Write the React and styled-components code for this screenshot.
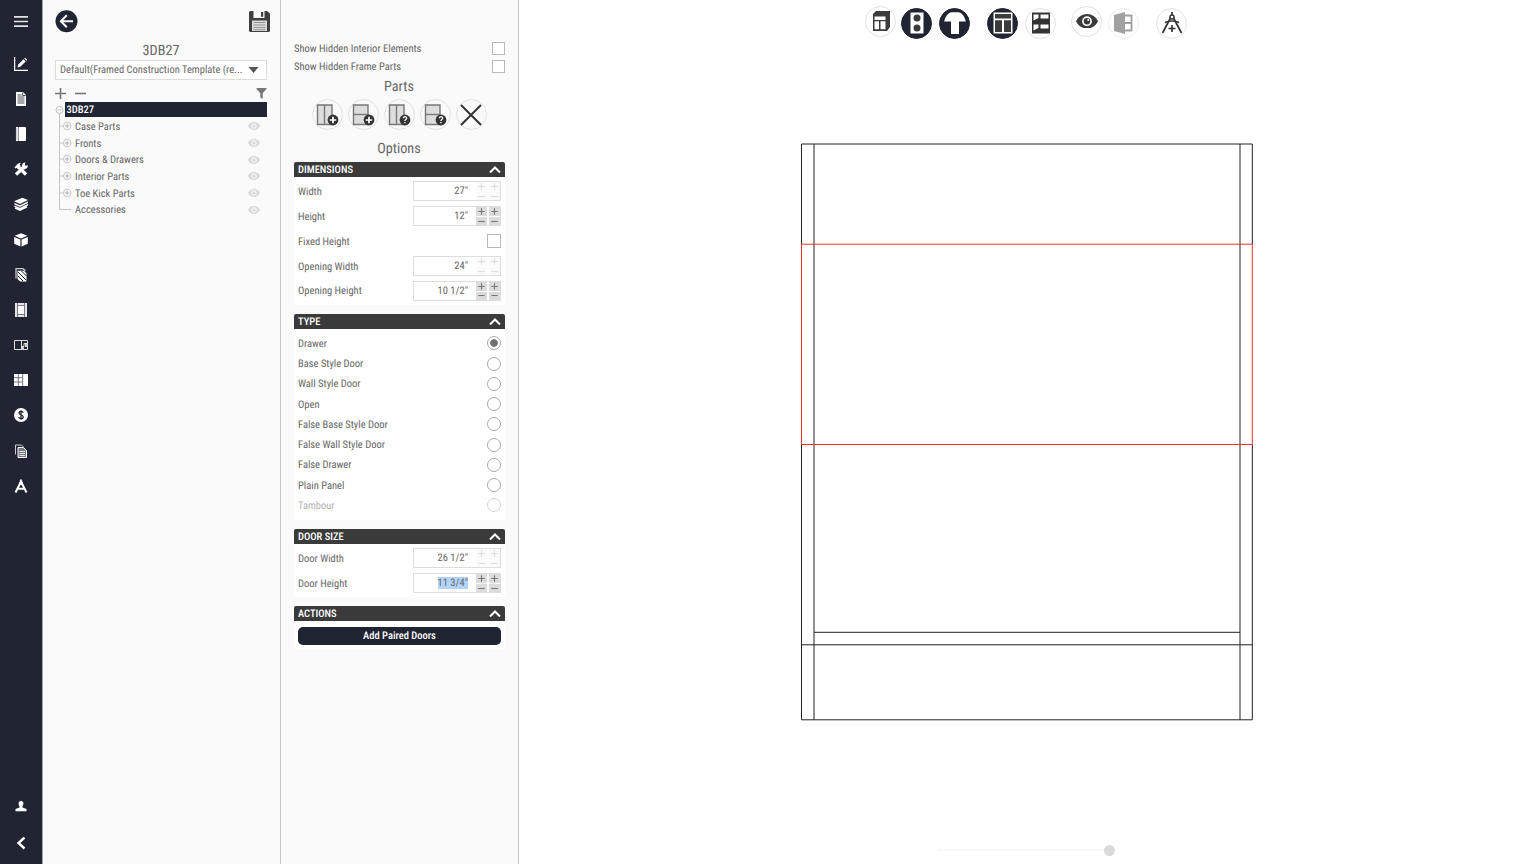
import React from "react";
import styled, {createGlobalStyle, css} from "styled-components";

const GlobalStyle = createGlobalStyle`
  * {
    box-sizing: border-box;
  }

  body {
    margin: 0;
    overflow: hidden;
    background: #fff;
    color: #666;
    font-family: "Roboto Condensed", Roboto, sans-serif;
    font-stretch: 75%;
    font-size: 10.5px;
    text-rendering: geometricPrecision;
  }

  svg {
    display: block;
    flex-shrink: 0;
  }
`

const Page = styled.div`
  display: flex;
  width: 1536px;
  height: 864px;
`

const Sidebar = styled.nav`
  display: flex;
  flex-direction: column;
  width: 43px;
  background: #212433;
  border-right: 1px solid #a6a7ad;
`

const NavItem = styled.a`
  display: flex;
  align-items: center;
  justify-content: center;
  height: ${({$height}) => $height || 35.2}px;
  margin-top: ${({$push}) => $push ? "auto" : 0};
  color: #fff;
`

const Panel = styled.section`
  display: flex;
  flex-direction: column;
  width: 238px;
  padding: 0 13px 0 12px;
  background: #fafafa;
  border-right: 1px solid #c6c6c6;
`

const PanelHeader = styled.header`
  display: flex;
  align-items: center;
  justify-content: space-between;
  height: 42px;
  margin: 0 -2.5px 0 -.5px;
`

const Heading = styled.h2`
  height: ${({$height}) => $height}px;
  margin: 0;
  font-size: 14.2px;
  font-weight: 400;
  line-height: ${({$height}) => $height}px;
  text-align: center;
`

const TemplateSelect = styled.div`
  display: flex;
  align-items: center;
  justify-content: space-between;
  height: 20px;
  padding: 0 7px 1px 4px;
  background: #fff;
  border: 1px solid #ddd;
  white-space: nowrap;
`

const TreeTools = styled.div`
  display: flex;
  align-items: center;
  gap: 9px;
  height: 22px;
  padding-top: 4px;

  svg:last-child {
    margin-left: auto;
  }
`

const TreeRoot = styled.div`
  display: flex;
  align-items: center;
  height: 16px;

  b {
    flex: 1;
    height: 15px;
    margin: -1px 0 0 1px;
    padding-left: 1.5px;
    background: #212433;
    color: #fff;
    font-weight: 500;
    line-height: 15px;
  }
`

const TreeRow = styled.div`
  display: flex;
  align-items: center;
  height: 16.7px;
  padding-right: 7px;

  span {
    flex: 1;
  }
`

const CheckRow = styled.label`
  display: flex;
  align-items: center;
  justify-content: space-between;
  height: 17.6px;
  padding-left: 1px;
`

const Checkbox = styled.i`
  width: ${({$size}) => $size || 13}px;
  height: ${({$size}) => $size || 13}px;
  background: #fff;
  border: 1px solid #b9b9b9;
`

const PartButtons = styled.div`
  display: flex;
  justify-content: center;
  gap: 5px;
  height: 37px;
`

const RoundButton = styled.button`
  display: flex;
  align-items: center;
  justify-content: center;
  flex-shrink: 0;
  width: 31px;
  height: 31px;
  margin: ${({$top}) => $top || 0}px 0 0 ${({$left}) => $left || 0}px;
  padding: 0;
  border: 1px solid ${({$active}) => $active ? "#212433" : "#e2e2e2"};
  border-radius: 50%;
  background: ${({$active}) => $active ? "#212433" : "transparent"};
  opacity: ${({$disabled}) => $disabled ? .55 : 1};
`

const SectionWrapper = styled.section`
  height: ${({$height}) => $height}px;
  margin: 0 0 9px .5px;
  background: #fff;
  border-radius: 3px;
`

const SectionHeader = styled.header`
  display: flex;
  align-items: center;
  justify-content: space-between;
  height: 15px;
  padding: 0 4px 1px 4.5px;
  border-radius: 2px 2px 0 0;
  background: #3a3a3a;
  color: #fff;
  font-weight: 500;
`

const SectionBody = styled.div`
  padding: ${({$top}) => $top}px 4px 0 4.5px;
`

const FieldRow = styled.div`
  display: flex;
  align-items: center;
  justify-content: space-between;
  height: ${({$height}) => $height || 24.6}px;
  opacity: ${({$disabled}) => $disabled ? .5 : 1};
`

const InputBox = styled.div`
  display: flex;
  align-items: center;
  justify-content: flex-end;
  width: 88px;
  height: 20px;
  background: #fff;
  border: 1px solid #ddd;
`

const Value = styled.span`
  margin-right: 8px;
  line-height: 12px;
  background: ${({$selected}) => $selected ? "#b3d4fd" : "transparent"};
`

const Stepper = styled.div`
  display: grid;
  grid-template-columns: 11px 11px;
  grid-template-rows: 9px 8px;
  gap: 1px 2px;
  opacity: ${({$disabled}) => $disabled ? .25 : 1};
`

const Step = styled.i`
  display: flex;
  align-items: center;
  justify-content: center;
  background: ${({$disabled}) => $disabled ? "#eee" : "#dcdcdc"};
`

const Radio = styled.i`
  width: 14px;
  height: 14px;
  border: 1px solid #aaa;
  border-radius: 50%;
  background: #fff;
  ${({$checked}) => $checked && css`
    background: radial-gradient(circle, #707070 3.4px, #fff 4.2px);
  `}
`

const ActionButton = styled.button`
  display: block;
  width: 100%;
  height: 18px;
  padding: 0 0 1px;
  border: 0;
  border-radius: 5px;
  background: #212433;
  color: #fff;
  font: inherit;
  font-weight: 500;
  text-rendering: inherit;
`

const Workspace = styled.main`
  display: flex;
  flex: 1;
  flex-direction: column;
  align-items: center;
  padding-right: 2px;
  background: #fff;
`

const Toolbar = styled.div`
  display: flex;
  align-self: flex-start;
  height: 143px;
  padding: 5.500px 0 0 346.400px;
`

const Slider = styled.div`
  display: flex;
  align-items: center;
  width: 177px;
  height: 12px;
  margin-top: 123px;
`

const SliderTrack = styled.div`
  flex: 1;
  height: 2px;
  background: #f7f7f7;
`

const SliderKnob = styled.i`
  width: 11px;
  height: 11px;
  border-radius: 50%;
  background: #dadada;
`

const icons = {
  menu: <path d="M0 1.8h14M0 6.500h14M0 11.200h14" stroke="#e4e4e8" strokeWidth="1.700"/>,
  design: <>
    <path d="M.6 0v13.4H14" fill="none" stroke="#fff" strokeWidth="1.3"/>
    <path d="M3.5 10.5l.7-3 5.3-5.2 2.2 2.2-5.4 5.2zM10.2 1.6l.9-.8 2.2 2.1-.9.9z" fill="#fff"/>
  </>,
  document: <>
    <path d="M2 0h7l3 3v11H2z" fill="#fff"/>
    <path d="M3.5 3h4M3.5 5h7M3.5 7h7M3.5 9h7M3.5 11h7M8.7.5v3h3" fill="none" stroke="#212433" strokeWidth=".8"/>
  </>,
  notebook: <>
    <path d="M2 0h9a1 1 0 011 1v12a1 1 0 01-1 1H2z" fill="#fff"/>
    <path d="M4.5 0v14" stroke="#777985" strokeWidth=".8"/>
    <path d="M1.5 2h2M1.5 4h2M1.5 6h2M1.5 8h2M1.5 10h2M1.5 12h2" stroke="#777985" strokeWidth=".7"/>
  </>,
  tools: <>
    <path d="M2 12.5L11 4M4 4.500l8 8" stroke="#fff" strokeWidth="3.3"/>
    <path d="M.4 5.5L4 1.4l3-.6-1.2 1.6.8 1.7L3.8 7 2.6 5.8l-1 .8zM7.600 4.500L8.800 1.300l2.500-1-.5 2.500 1 .9 2.200-.4-.8 2.800-3 1.500z" fill="#fff"/>
  </>,
  layers: <>
    <path d="M0 4.2L8.3.7 14 3 6 7z" fill="#fff"/>
    <path d="M.4 6.7L6 9.2l8-4M.4 9.2L6 11.7l8-4M1 11.2l5 2 7-3.3" fill="none" stroke="#fff" strokeWidth="1.4"/>
  </>,
  cube: <path d="M7 .3l6.3 2.5L7 5.5.7 2.8zM.2 4l6.2 2.6v7L.2 10.8zM13.8 4L7.6 6.6v7l6.2-2.8z" fill="#fff"/>,
  material: <>
    <path d="M2 10.500V.7h7l2.500 2" fill="none" stroke="#ccc" strokeWidth="1.3"/>
    <path d="M3.500 2.700H10l2.500 2.700v8.100H6.200L3.500 11z" fill="#fff"/>
    <path d="M4 4l8.500 8.500M4 8l5 5M7.500 3l5 5" stroke="#212433" strokeWidth="1"/>
  </>,
  frame: <>
    <path d="M1 0h12v14H1z" fill="#e4e4e8"/>
    <path d="M4 2.500h6v9H4z" fill="#fff"/>
    <path d="M3.500 0v14M10.500 0v14M3.500 2.500h7M3.500 11.500h7" stroke="#6a6c78" strokeWidth=".9"/>
  </>,
  room: <>
    <path d="M.5 2.5h13v9H.5zM7.5 2.5v9M10 5.5h3.5M10 5.5v3H7.5" fill="none" stroke="#ddd"/>
    <path d="M8 9h2v2.5H8zM11 6h2.5v3H11z" fill="#ccc"/>
  </>,
  grid: <>
    <path d="M0 1h14v12H0z" fill="#fff"/>
    <path d="M4.300 1v12M8.700 1v12M0 4.700h8.700M0 9h8.700" stroke="#6a6c78" strokeWidth=".9"/>
  </>,
  dollar: <>
    <circle cx="7" cy="7" r="7" fill="#fff"/>
    <path d="M9.2 4.8C8.8 2.9 5 2.9 5 5s4.2 1.7 4.2 3.9-4 2.2-4.5.2M7 2.2v9.6" fill="none" stroke="#212433" strokeWidth="1.3"/>
  </>,
  copy: <>
    <path d="M1.500 10.500V1h6l2 2" fill="none" stroke="#ccc"/>
    <path d="M4 3.500h5.500l3 3.300v6.700H4z" fill="#777985" stroke="#fff"/>
    <path d="M5.500 7.500H11M5.500 9.500H11M5.500 11.500H11" stroke="#fff" strokeWidth=".8"/>
  </>,
  compass: <>
    <path d="M7 .5v3M6.300 4L1.500 13.500M7.700 4l4.800 9.500M3 9.800h8" fill="none" stroke="#fff" strokeWidth="2"/>
    <circle cx="7" cy="4" r="2" fill="#fff"/>
  </>,
  user: <path d="M1.500 12.200V10l4-1.500V7.200C3.800 4.800 4.500 2 7 2s3.200 2.800 1.500 5.200v1.300l4 1.500v2.200z" fill="#fff"/>,
  collapse: <path d="M10.500 .5L4.500 6l6 5.500" fill="none" stroke="#fff" strokeWidth="2.400"/>
}

const navItems = ["design", "document", "notebook", "tools", "layers", "cube", "material", "frame", "room", "grid", "dollar", "copy", "compass"]

const treeItems = ["Case Parts", "Fronts", "Doors & Drawers", "Interior Parts", "Toe Kick Parts", "Accessories"]

const doorTypes = ["Drawer", "Base Style Door", "Wall Style Door", "Open", "False Base Style Door", "False Wall Style Door", "False Drawer", "Plain Panel", "Tambour"]

const NavIcon = ({name}) => (
    <svg width="14" height="14" viewBox="0 0 14 14">{icons[name]}</svg>
)

const BackIcon = () => (
    <svg width="23" height="23" viewBox="0 0 23 23">
        <circle cx="11.5" cy="11.3" r="11" fill="#212433"/>
        <path d="M18 11.3H6M11.8 5.3l-6 6 6 6" fill="none" stroke="#fff" strokeWidth="2"/>
    </svg>
)

const SaveIcon = () => (
    <svg width="21" height="21" viewBox="0 0 21 21">
        <path d="M1 0h17l3 2.5V20l-1 1H1l-1-1V1z" fill="#3f3f3f"/>
        <path d="M4.5 0h11v7h-11z" fill="#fafafa"/>
        <path d="M12 1h2.2v4.8H12z" fill="#3f3f3f"/>
        <path d="M3 9.5h15V20H3z" fill="#ddd"/>
        <path d="M4.5 11.5h12M4.5 14h12M4.5 16.5h12M4.5 18.7h12" stroke="#888" strokeWidth=".9"/>
    </svg>
)

const TreeLine = ({last}) => (
    <svg width="20" height="16.7" viewBox="0 0 20 16.7">
        <path d={last ? "M4.500 0v8.500H16" : "M4.500 0v16.700M4.500 8H9"} fill="none" stroke="#c4c4c4"/>
        {!last && <>
            <circle cx="12.2" cy="8" r="3.8" fill="#fafafa" stroke="#c4c4c4" strokeWidth=".9"/>
            <path d="M9.8 8h4.8M12.2 5.6v4.8" stroke="#b0b0b0" strokeWidth=".9"/>
        </>}
    </svg>
)

const EyeIcon = ({width, color, background}) => (
    <svg width={width} height={width * .66} viewBox="0 0 22 14.500">
        <path d="M0 7.200C2 3 6 0 11 0s9 3 11 7.200C20 11.500 16 14.500 11 14.500S2 11.500 0 7.200z" fill={color}/>
        <circle cx="11" cy="7.200" r="4.900" fill={background}/>
        <circle cx="11" cy="7.200" r="3.200" fill={color}/>
        <circle cx="12.200" cy="6" r="1" fill={background}/>
    </svg>
)

const PartIcon = ({horizontal, question}) => (
    <svg width="23" height="23" viewBox="0 0 23 23">
        <path d="M1.500 2h14.500v19.500H1.500z" fill="#ddd" stroke="#777" strokeWidth="1.400"/>
        <path d={horizontal ? "M1.500 11.500H16" : "M8.500 2v19.500"} stroke="#777" strokeWidth="1.400"/>
        <circle cx="17" cy="17" r="5.400" fill="#333"/>
        {question
            ? <path d="M15.400 15.300c0-2.300 3.500-2 3.200 0-.2 1.300-1.700 1.200-1.700 2.600M16.900 18.900v1.300" fill="none" stroke="#fff" strokeWidth="1.300"/>
            : <path d="M13.700 17h6.600M17 13.700v6.600" stroke="#fff" strokeWidth="1.700"/>}
    </svg>
)

const Steppers = ({disabled}) => (
    <Stepper $disabled={disabled}>
        {["plus", "plus", "minus", "minus"].map((kind, i) => (
            <Step key={i} $disabled={disabled}>
                <svg width="7" height="7" viewBox="0 0 7 7">
                    <path d={kind === "plus" ? "M.3 3.5h6.4M3.5.3v6.4" : "M.3 3.5h6.4"} stroke="#777" strokeWidth="1.1"/>
                </svg>
            </Step>
        ))}
    </Stepper>
)

const NumberField = ({label, value, disabled, selected, height}) => (
    <FieldRow $height={height}>
        {label}
        <InputBox>
            <Value $selected={selected}>{value}</Value>
            <Steppers disabled={disabled}/>
        </InputBox>
    </FieldRow>
)

const Section = ({title, height, top, children}) => (
    <SectionWrapper $height={height}>
        <SectionHeader>
            {title}
            <svg width="12" height="8" viewBox="0 0 12 8">
                <path d="M1 7.500l5-5 5 5" fill="none" stroke="#fff" strokeWidth="2"/>
            </svg>
        </SectionHeader>
        <SectionBody $top={top}>{children}</SectionBody>
    </SectionWrapper>
)

const ToolIcon = ({children}) => (
    <svg width="24" height="24" viewBox="0 0 24 24">{children}</svg>
)

const CabinetDrawing = () => (
    <svg width="453" height="578" viewBox="0 0 453 578" fill="none" stroke="#222">
        <path d="M1.500 101V1H452.300V101M1.500 301.500V576.800H452.300V301.500M14 1V576.800M440 1V576.800M14 489.300H440M1.500 501.800H452.300"/>
        <path d="M1.500 101.200H452.300V301.500H1.500z" stroke="#f0302a"/>
    </svg>
)

const App = () => {


    return (
        <Page>
            <GlobalStyle/>
            <Sidebar>
                <NavItem $height={43}><NavIcon name="menu"/></NavItem>
                <NavItem $height={3}/>
                {navItems.map(name => <NavItem key={name}><NavIcon name={name}/></NavItem>)}
                <NavItem $push $height={37}><NavIcon name="user"/></NavItem>
                <NavItem $height={40}><NavIcon name="collapse"/></NavItem>
            </Sidebar>

            <Panel>
                <PanelHeader>
                    <BackIcon/>
                    <SaveIcon/>
                </PanelHeader>
                <Heading $height={18}>3DB27</Heading>
                <TemplateSelect>
                    Default(Framed Construction Template (re...
                    <svg width="11" height="6" viewBox="0 0 10 6"><path d="M0 0h10L5 6z" fill="#555"/></svg>
                </TemplateSelect>
                <TreeTools>
                    <svg width="11" height="11" viewBox="0 0 11 11"><path d="M0 5.5h11M5.5 0v11" stroke="#777" strokeWidth="1.6"/></svg>
                    <svg width="11" height="11" viewBox="0 0 11 11"><path d="M0 5.5h11" stroke="#777" strokeWidth="1.6"/></svg>
                    <svg width="11" height="11" viewBox="0 0 11 11"><path d="M.5 0h10v1L6.7 5.3V11L4.3 9.5V5.3L.5 1z" fill="#777"/></svg>
                </TreeTools>
                <TreeRoot>
                    <svg width="9" height="16" viewBox="0 0 9 16">
                        <circle cx="4.5" cy="8" r="3.5" fill="none" stroke="#c4c4c4"/>
                        <path d="M2.5 8h4M4.5 11.5V16" stroke="#c4c4c4"/>
                    </svg>
                    <b>3DB27</b>
                </TreeRoot>
                {treeItems.map((item, i) => (
                    <TreeRow key={item}>
                        <TreeLine last={i === treeItems.length - 1}/>
                        <span>{item}</span>
                        <EyeIcon width={12} color="#d8d8d8" background="#fafafa"/>
                    </TreeRow>
                ))}
            </Panel>

            <Panel>
                <Heading $height={40}/>
                <CheckRow>Show Hidden Interior Elements<Checkbox/></CheckRow>
                <CheckRow>Show Hidden Frame Parts<Checkbox/></CheckRow>
                <Heading $height={24}>Parts</Heading>
                <PartButtons>
                    <RoundButton><PartIcon/></RoundButton>
                    <RoundButton><PartIcon horizontal/></RoundButton>
                    <RoundButton><PartIcon question/></RoundButton>
                    <RoundButton><PartIcon horizontal question/></RoundButton>
                    <RoundButton>
                        <svg width="22" height="22" viewBox="0 0 22 22"><path d="M1 1l20 20M21 1L1 21" stroke="#333" strokeWidth="2"/></svg>
                    </RoundButton>
                </PartButtons>
                <Heading $height={26}>Options</Heading>

                <Section title="DIMENSIONS" height={143} top={2}>
                    <NumberField label="Width" value={'27"'} disabled/>
                    <NumberField label="Height" value={'12"'}/>
                    <FieldRow $height={26}>Fixed Height<Checkbox $size={14}/></FieldRow>
                    <NumberField label="Opening Width" value={'24"'} height={24} disabled/>
                    <NumberField label="Opening Height" value={'10 1/2"'}/>
                </Section>

                <Section title="TYPE" height={206} top={4}>
                    {doorTypes.map(type => (
                        <FieldRow key={type} $height={20.25} $disabled={type === "Tambour"}>
                            {type}
                            <Radio $checked={type === "Drawer"}/>
                        </FieldRow>
                    ))}
                </Section>

                <Section title="DOOR SIZE" height={68} top={2}>
                    <NumberField label="Door Width" value={'26 1/2"'} disabled/>
                    <NumberField label="Door Height" value={'11 3/4"'} selected/>
                </Section>

                <Section title="ACTIONS" height={44} top={6}>
                    <ActionButton>Add Paired Doors</ActionButton>
                </Section>
            </Panel>

            <Workspace>
                <Toolbar>
                    <RoundButton>
                        <ToolIcon>
                            <path d="M4 5l3-3h14v16l-3 4H4z" fill="#3b3b3b"/>
                            <path d="M5.500 7.500h11v3.500h-11zM5.500 12.200h4.500v8H5.500zM11.500 12.200h5v8h-5z" fill="#fff"/>
                        </ToolIcon>
                    </RoundButton>
                    <RoundButton $active $top={2} $left={5}>
                        <ToolIcon>
                            <path d="M5.500 1.500h13v21h-13z" fill="#fff"/>
                            <circle cx="12" cy="6.900" r="3.500" fill="#3b3b3b"/>
                            <circle cx="12" cy="17" r="3.500" fill="#3b3b3b"/>
                        </ToolIcon>
                    </RoundButton>
                    <RoundButton $active $top={2} $left={7}>
                        <ToolIcon><path d="M1.200 10.500C2 6 5 1.200 9 1.200h6c4 0 7 4.800 7.800 9.300H16v12.500H8V10.500z" fill="#fff"/></ToolIcon>
                    </RoundButton>
                    <RoundButton $active $top={2} $left={17}>
                        <ToolIcon>
                            <path d="M2.500 1.500h19v21h-19z" fill="#fff"/>
                            <path d="M4 3h16v4.500H4zM4 9.200h7V21H4zM13 9.200h7V21h-7z" fill="#3b3b3b"/>
                        </ToolIcon>
                    </RoundButton>
                    <RoundButton $top={2} $left={7}>
                        <ToolIcon>
                            <path d="M3 1.500h18v21H3z" fill="#333"/>
                            <path d="M4.500 3.500h5v3.500L4.500 9.500zM11.500 3.500h8v4h-8zM4.500 13.500h5V17L4.500 19.500zM11.500 13.500h8v4h-8z" fill="#fff"/>
                        </ToolIcon>
                    </RoundButton>
                    <RoundButton $left={15}><EyeIcon width={22} color="#3b3b3b" background="#fff"/></RoundButton>
                    <RoundButton $top={2} $left={6} $disabled>
                        <ToolIcon>
                            <path d="M2 4l11-3v22L2 20z" fill="#555"/>
                            <path d="M13 4.500h6.500v15H13M13 12h6.500" fill="none" stroke="#555" strokeWidth="1.800"/>
                        </ToolIcon>
                    </RoundButton>
                    <RoundButton $top={2} $left={17}>
                        <ToolIcon>
                            <path d="M12 1v3M10.500 7L2.500 22M13.500 7l8 15M5 11.500q7-3 14 0M12 14v7M8.500 17.500h7" fill="none" stroke="#333" strokeWidth="1.700"/>
                            <circle cx="12" cy="6" r="2" fill="none" stroke="#333" strokeWidth="1.500"/>
                        </ToolIcon>
                    </RoundButton>
                </Toolbar>
                <CabinetDrawing/>
                <Slider>
                    <SliderTrack/>
                    <SliderKnob/>
                </Slider>
            </Workspace>
        </Page>
    )
}


export default App
